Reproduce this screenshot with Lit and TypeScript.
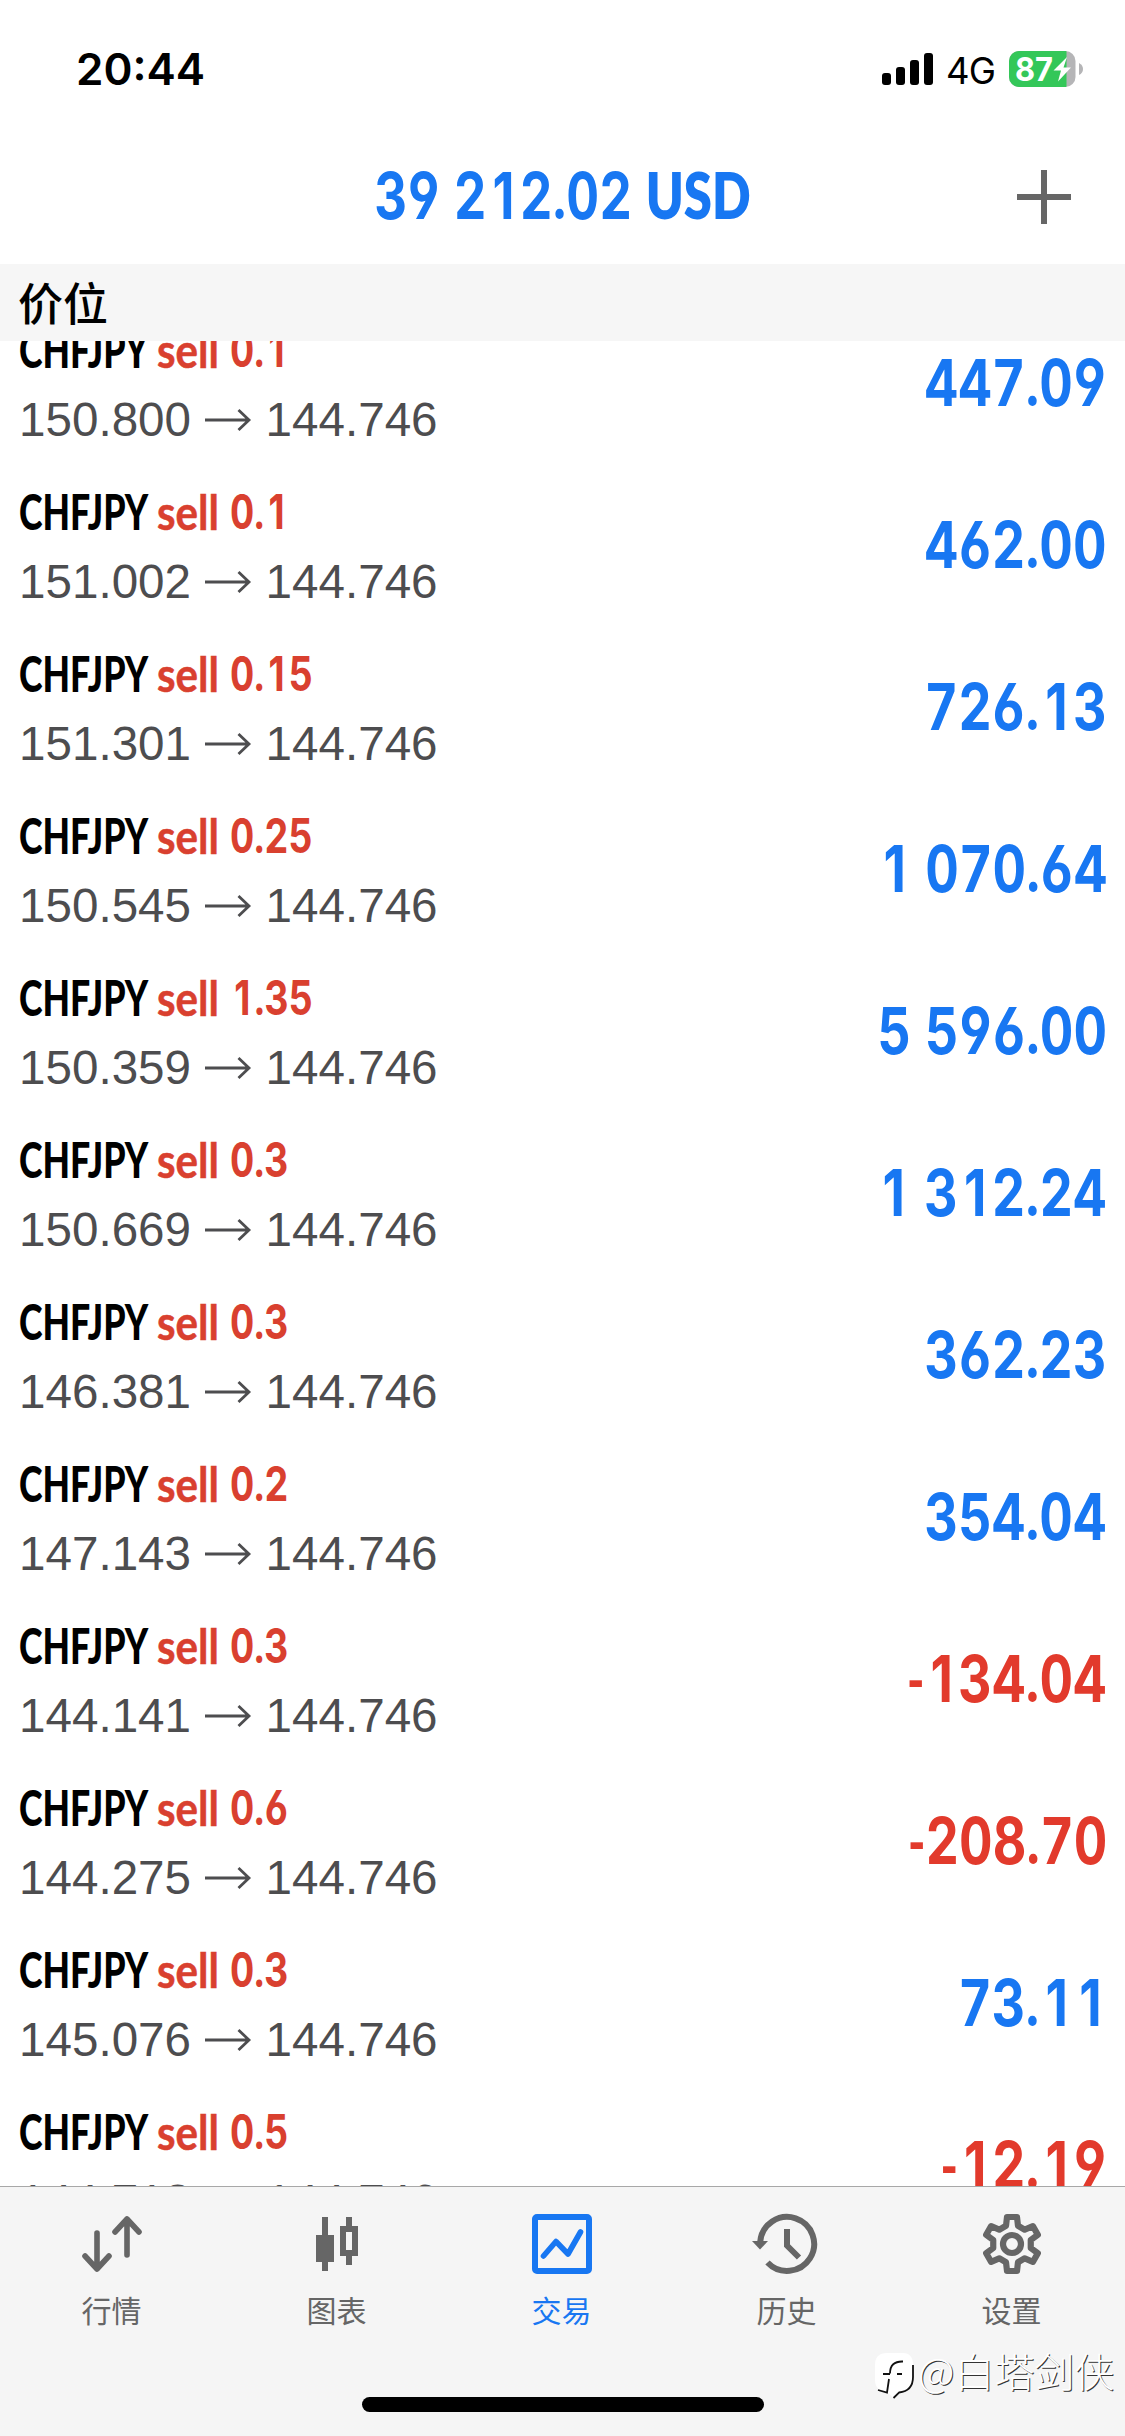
import { LitElement, html, css, svg } from "lit";
import { customElement, property } from "lit/decorators.js";

interface Position {
  volume: string;
  open: string;
  profit: string;
}

const POSITIONS: Position[] = [
  { volume: "0.1", open: "150.800", profit: "447.09" },
  { volume: "0.1", open: "151.002", profit: "462.00" },
  { volume: "0.15", open: "151.301", profit: "726.13" },
  { volume: "0.25", open: "150.545", profit: "1 070.64" },
  { volume: "1.35", open: "150.359", profit: "5 596.00" },
  { volume: "0.3", open: "150.669", profit: "1 312.24" },
  { volume: "0.3", open: "146.381", profit: "362.23" },
  { volume: "0.2", open: "147.143", profit: "354.04" },
  { volume: "0.3", open: "144.141", profit: "-134.04" },
  { volume: "0.6", open: "144.275", profit: "-208.70" },
  { volume: "0.3", open: "145.076", profit: "73.11" },
  { volume: "0.5", open: "144.718", profit: "-12.19" },
];

/* Condensed figures: equal-width digits, a plain "1", a round point and a short minus. */
const figureStyles = css`
  .fig { font-family: Inter, sans-serif; font-weight: 650; font-feature-settings: "tnum", "cv03", "cv04"; white-space: pre; }
  .one { font-feature-settings: "tnum" 0; padding: 0 0.105em 0 0.115em; }
  .dot { font-family: Lato, sans-serif; font-weight: 900; padding: 0 0.015em; }
  .minus { font-family: Lato, sans-serif; font-weight: 900; font-size: 0.9em; }
`;

const figures = (text: string) =>
  [...text].map((c) =>
    c === "1" ? html`<span class="one">1</span>`
      : c === "." ? html`<span class="dot">.</span>`
      : c === "-" ? html`<span class="minus">-</span>`
      : c,
  );

@customElement("position-row")
class PositionRow extends LitElement {
  @property({ attribute: false }) item!: Position;

  static styles = [figureStyles, css`
    :host { display: flex; height: 162px; flex: none; justify-content: space-between; box-sizing: border-box; padding: 0 18px 0 19px; }
    .info { display: flex; flex-direction: column; padding-top: 17px; }
    .name { display: grid; grid-template-columns: 138px 73px 120px; height: 60px; line-height: 60px; font-family: Lato, sans-serif; font-weight: 700; font-size: 48.5px; color: #000; white-space: nowrap; }
    .sym { font-weight: 900; transform: scaleX(0.735); transform-origin: left; }
    .f { letter-spacing: -0.07em; }
    .sell { color: #d9402f; transform: scaleX(0.87); transform-origin: left; -webkit-text-stroke: 0.5px #d9402f; }
    .vol { color: #d9402f; font-size: 47.5px; transform: scaleX(0.79); transform-origin: left; }
    .price { display: flex; align-items: center; height: 60px; margin-top: 11px; font-family: "Liberation Sans", sans-serif; font-size: 47.6px; color: #4d4d4f; line-height: 60px; }
    .arrow { width: 48px; height: 24px; margin: 0 12.5px 0 14px; }
    .profit { line-height: 159px; font-size: 65px; color: #1877f2; transform: scaleX(0.8); transform-origin: right; }
    .loss { color: #e23a2c; }
  `];

  render() {
    const p = this.item;
    return html`
      <div class="info">
        <div class="name"><span class="sym">CH<span class="f">F</span>JPY</span><span class="sell">sell</span><span class="vol fig">${figures(p.volume)}</span></div>
        <div class="price">
          <span>${p.open}</span>
          <svg class="arrow" viewBox="0 0 48 24" fill="none" stroke="#4d4d4f" stroke-width="2.8"><path d="M0 12H44M33.5 2L44 12L33.5 22" /></svg>
          <span>144.746</span>
        </div>
      </div>
      <div class="profit fig ${p.profit.startsWith("-") ? "loss" : ""}">${figures(p.profit)}</div>
    `;
  }
}

const TOOTH = [[-6, -18.2], [-5, -27], [5, -27], [6, -18.2]];
const GEAR = Array.from({ length: 6 }, (_, k) => {
  const a = (k * Math.PI) / 3;
  return TOOTH.map(([x, y]) => `${(32 + x * Math.cos(a) - y * Math.sin(a)).toFixed(2)},${(32 + x * Math.sin(a) + y * Math.cos(a)).toFixed(2)}`).join(" ");
}).join(" ");

const ICONS = {
  quotes: svg`<g fill="none" stroke="#666" stroke-width="5.6" stroke-linecap="round" stroke-linejoin="round"><path d="M17 21V57M5 44L17 57L29 44M47 43V7M35 20L47 7L59 20"/></g>`,
  chart: svg`<g fill="#666"><path d="M17 5h6v18h6v27h-6v9h-6v-9h-6v-27h6zM41 5h6v9h6v30h-6v9h-6v-9h-6v-30h6zM41 20v18h6v-18z" fill-rule="evenodd"/></g>`,
  trade: svg`<g fill="none" stroke="#1877f2" stroke-width="6" stroke-linejoin="round"><rect x="5" y="5" width="54" height="54" rx="2"/><path stroke-linecap="round" stroke-width="5.6" d="M13.5 44L26 29.500L38 42L50.500 20"/></g>`,
  history: svg`<g fill="none" stroke="#666" stroke-width="6"><path d="M5.200 30A27 27 0 1 1 12.500 50.500"/><path d="M32 17V33.500L44 45.500"/></g><path d="M-3 29H13L5 37.500Z" fill="#666"/>`,
  settings: svg`<g fill="none" stroke="#666" stroke-width="6.2" stroke-linejoin="round"><polygon points=${GEAR}/><circle cx="32" cy="32" r="9"/></g>`,
};

const TABS = [
  { label: "行情", icon: ICONS.quotes, on: false },
  { label: "图表", icon: ICONS.chart, on: false },
  { label: "交易", icon: ICONS.trade, on: true },
  { label: "历史", icon: ICONS.history, on: false },
  { label: "设置", icon: ICONS.settings, on: false },
];

@customElement("app-root")
class AppRoot extends LitElement {
  static styles = [figureStyles, css`
    :host { display: flex; flex-direction: column; position: relative; width: 1125px; height: 2436px; overflow: hidden; background: #fff; }
    .status { display: flex; height: 138px; flex: none; align-items: center; justify-content: space-between; box-sizing: border-box; padding: 0 41px 0 76px; font-family: Inter, sans-serif; }
    .time { font-size: 44px; font-weight: 600; color: #000; }
    .right { display: flex; align-items: center; }
    .bars { width: 52px; height: 32px; margin-right: 12px; }
    .net { font-size: 36.500px; line-height: 56px; color: #000; width: 48px; margin: 3px 15px 0 0; letter-spacing: -0.8px; }
    .battery { width: 75px; height: 36px; }
    .lvl { font-family: Inter, sans-serif; font-weight: 700; font-size: 33px; }
    .title { display: grid; grid-template-columns: 1fr auto 1fr; height: 126px; flex: none; align-items: center; box-sizing: border-box; padding: 0 54px 8px; }
    .balance { grid-column: 2; font-size: 65px; line-height: 80px; margin-top: -4px; color: #1877f2; transform: scaleX(0.782); }
    .cur { font-family: Lato, sans-serif; font-weight: 800; }
    .plus { justify-self: end; width: 54px; height: 54px; }
    .section { height: 77px; flex: none; background: #f6f6f6; box-sizing: border-box; padding-left: 18px; font: 500 45px/75px "Noto Sans CJK SC", sans-serif; color: #000; }
    .list { flex: 1; min-height: 0; overflow: hidden; display: flex; flex-direction: column; }
    .list position-row:first-child { margin-top: -39px; }
    .tabbar { height: 250px; flex: none; box-sizing: border-box; border-top: 1px solid #a8a8a8; background: #f5f5f5; display: flex; flex-direction: column; align-items: center; }
    .tabs { display: grid; grid-template-columns: repeat(5, 225px); height: 210px; margin-right: 2px; }
    .tab { display: flex; flex-direction: column; align-items: center; padding-top: 25px; font: 400 30px/44px "Noto Sans CJK SC", sans-serif; color: #666; }
    .tab svg { width: 64px; height: 64px; overflow: visible; margin-bottom: 11px; }
    .on { color: #1877f2; }
    .home { width: 402px; height: 15px; border-radius: 8px; background: #000; }
    .mark { position: absolute; left: 875px; top: 2340px; display: flex; align-items: center; gap: 4px; font: 300 40px/60px "Noto Sans CJK SC", sans-serif; color: #fff; text-shadow: 1px 1px 0 #333; white-space: nowrap; }
    .mark svg { width: 39px; height: 46px; margin-top: 12px; }
  `];

  render() {
    return html`
      <div class="status">
        <div class="time">20:44</div>
        <div class="right">
          <svg class="bars" viewBox="0 0 52 32"><rect y="20" width="9" height="12" rx="3"/><rect x="14" y="14" width="9" height="18" rx="3"/><rect x="28" y="7" width="9" height="25" rx="3"/><rect x="42" width="9" height="32" rx="3"/></svg>
          <span class="net">4G</span>
          <svg class="battery" viewBox="0 0 75 36">
            <defs><clipPath id="b"><rect width="66.5" height="36" rx="10"/></clipPath></defs>
            <g clip-path="url(#b)"><rect width="67" height="36" fill="#b5b5b7"/><rect width="57.5" height="36" fill="#34c759"/></g>
            <path d="M70 12Q74 14 74 18Q74 22 70 24Z" fill="#b5b5b7"/>
            <text class="lvl" x="6" y="29.500" fill="#fff" textLength="38" lengthAdjust="spacingAndGlyphs">87</text>
            <path d="M58 6L44.500 19.500H52L49 30.500L62 16.500H54.500Z" fill="#fff"/>
          </svg>
        </div>
      </div>
      <div class="title">
        <div class="balance fig">${figures("39 212.02 ")}<span class="cur">USD</span></div>
        <svg class="plus" viewBox="0 0 54 54" fill="#666"><path d="M24 0h6v24h24v6h-24v24h-6v-24h-24v-6h24z"/></svg>
      </div>
      <div class="section">价位</div>
      <div class="list">${POSITIONS.map((p) => html`<position-row .item=${p}></position-row>`)}</div>
      <div class="tabbar">
        <div class="tabs">
          ${TABS.map((t) => html`<div class="tab ${t.on ? "on" : ""}"><svg viewBox="0 0 64 64">${t.icon}</svg><span>${t.label}</span></div>`)}
        </div>
        <div class="home"></div>
      </div>
      <div class="mark">
        <svg viewBox="0 0 39 46"><path d="M12 0H28Q38 0 38 12V27Q38 38 25 39L18.500 45L13 40Q0 38 0 27V12Q0 0 12 0Z" fill="#fff"/><path d="M38 12V24Q38 38 24 39.500L18.500 45M28 8.500Q15 8 15 20.500M8 21H15M22 21H27M14 26L12 39.500L3 37" fill="none" stroke="#111" stroke-width="1.800"/></svg>
        <span>@白塔剑侠</span>
      </div>
    `;
  }
}
